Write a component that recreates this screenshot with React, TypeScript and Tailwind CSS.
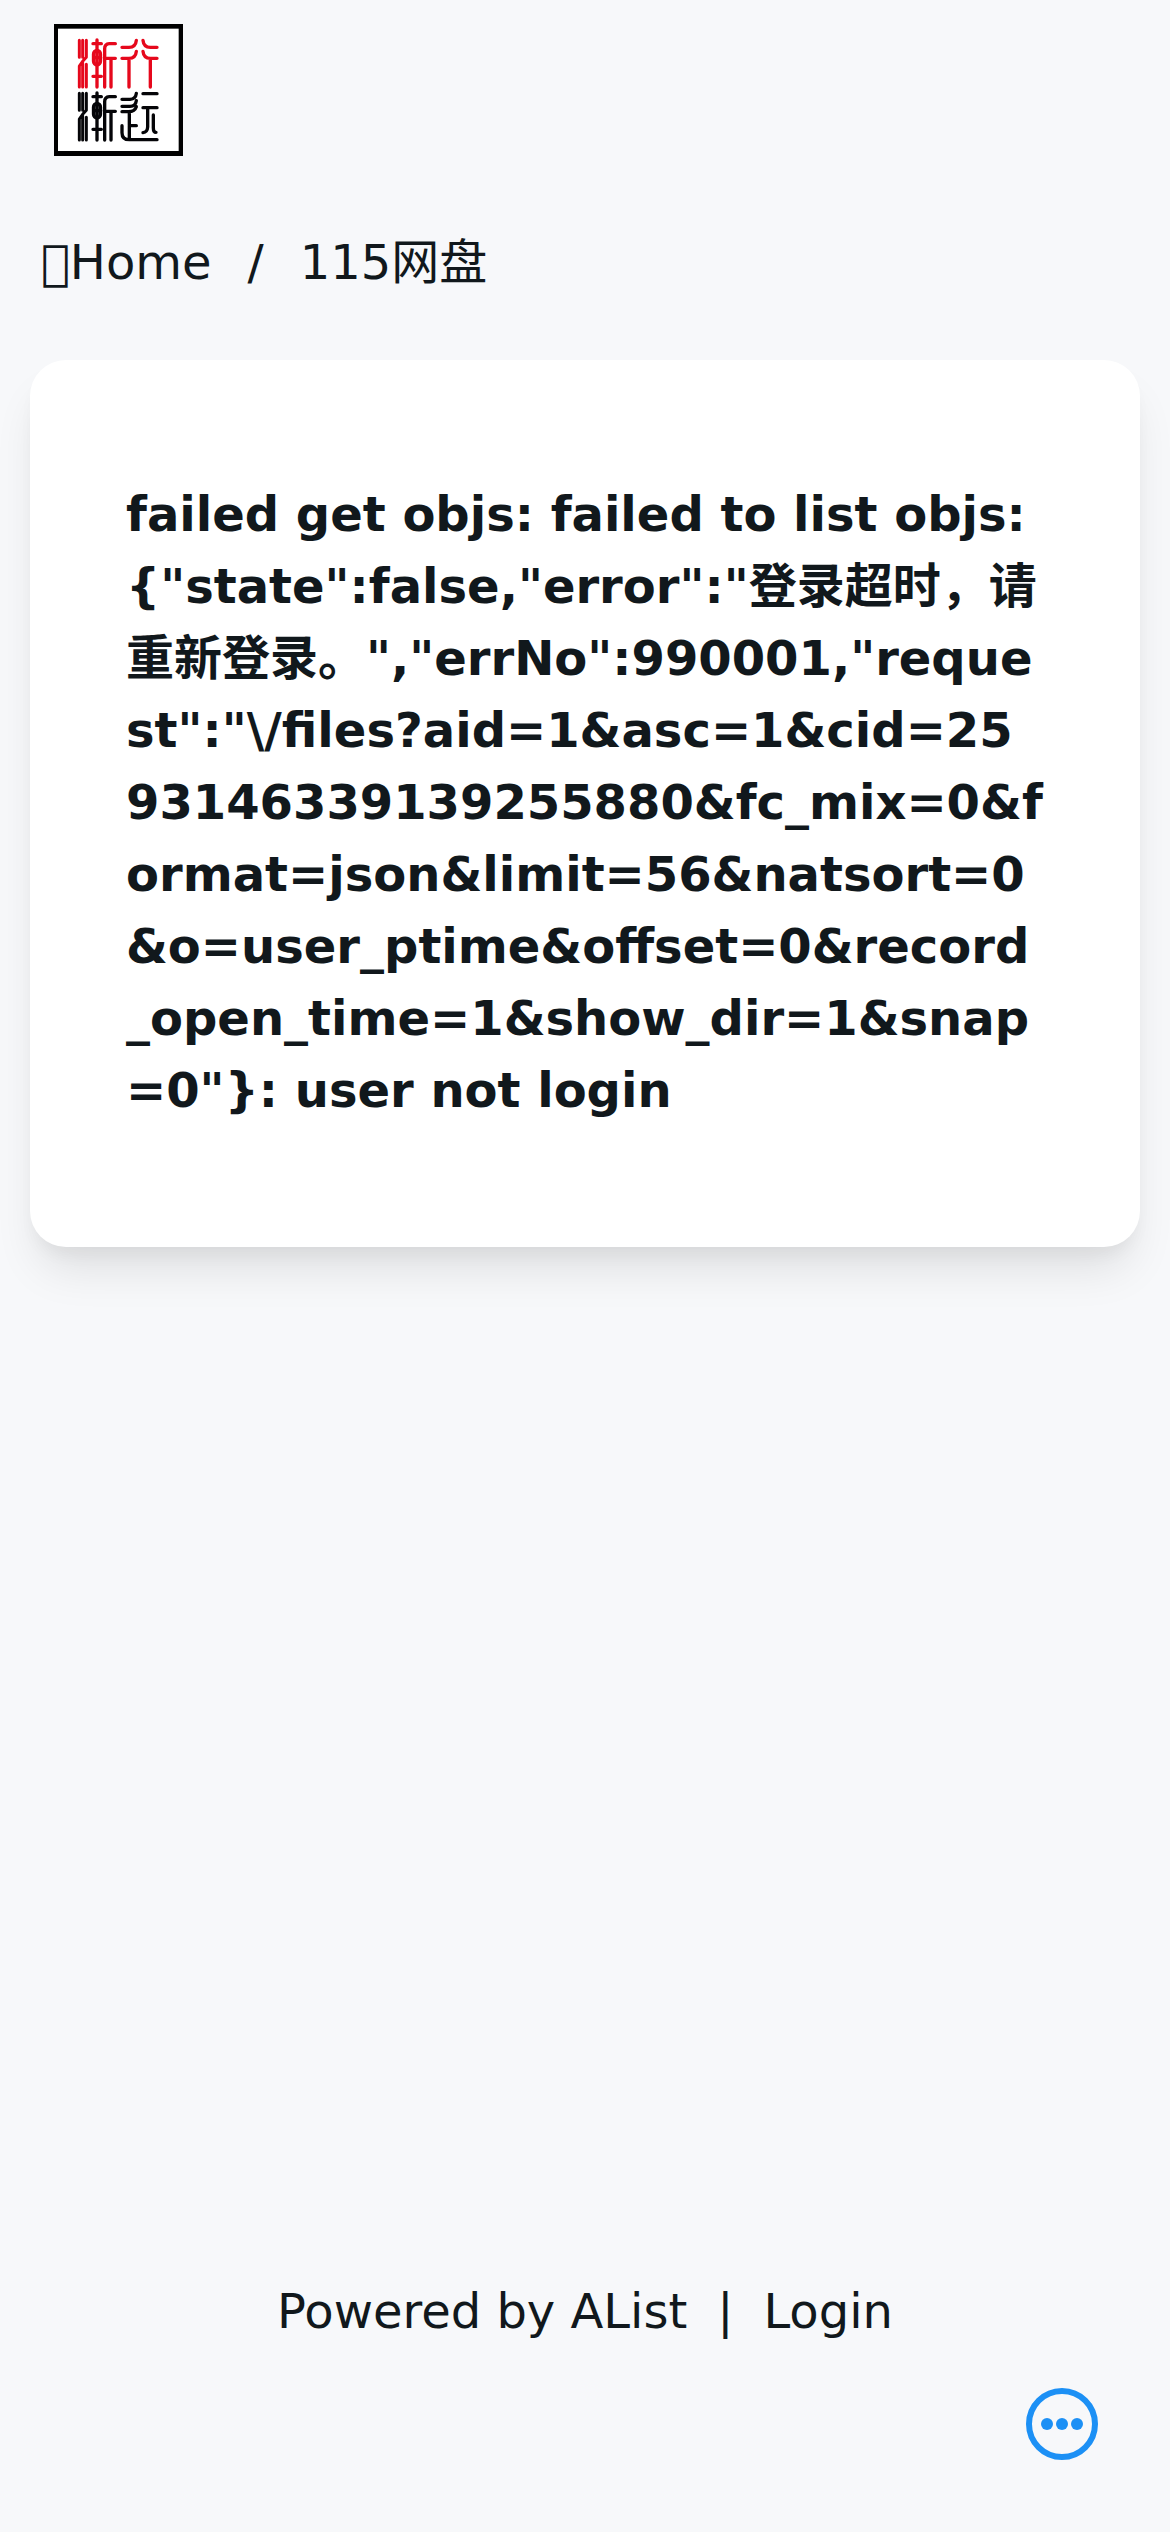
import React from 'react';

const errorMessage = 'failed get objs: failed to list objs: {"state":false,"error":"登录超时，请重新登录。","errNo":990001,"request":"\\/files?aid=1&asc=1&cid=2593146339139255880&fc_mix=0&format=json&limit=56&natsort=0&o=user_ptime&offset=0&record_open_time=1&show_dir=1&snap=0"}: user not login';

// left half shared by both rows of the seal
const SealLeft: React.FC = () => (
    <>
        <path strokeWidth="9" d="M118 91V142M128 91V142M139 91V142L128 154L118 168V231M128 158V231M139 163V231" />
        <path d="M171 90V231M159 101H184M159 199H184M226 101H208Q194 102 194 116V231M194 145H226M213 145V231" />
        <rect x="161" y="122" width="20" height="42" rx="10" strokeWidth="11" />
        <path d="M161 143H182" />
    </>
);

const Logo: React.FC = () => (
    <svg className="w-[129px] h-[132px]" viewBox="42 42 387 396" fill="none" strokeWidth="10" strokeLinecap="round" strokeLinejoin="round" role="img" aria-label="渐行渐远">
        <rect x="42" y="42" width="387" height="396" fill="#000" />
        <rect x="54" y="56" width="362" height="367" fill="#fff" />
        <g stroke="#e6081c">
            <SealLeft />
            <path d="M289 91Q287 112 267 112H246M289 124Q287 145 267 145H246M267 145V231" />
            <path d="M309 91Q311 112 331 112H351M309 124Q311 145 331 145H351M331 145V231" />
        </g>
        <g stroke="#050508">
            <g transform="translate(0 159)">
                <SealLeft />
            </g>
            <path d="M289 250Q287 267 270 268H246M289 272Q287 289 270 289H246M289 290Q284 305 266 305H246M268 306V388M268 347H289M246 347V368Q246 389 268 389H351" />
            <path d="M309 251H351M309 293H351M323 293V351Q322 367 309 368M340 315V354Q340 367 348 367" />
        </g>
    </svg>
);

const MoreIcon: React.FC = () => (
    <svg className="w-[72px] h-[72px]" viewBox="0 0 72 72" fill="currentColor" aria-hidden="true">
        <circle cx="36" cy="36" r="33" fill="none" stroke="currentColor" strokeWidth="6" />
        <circle cx="21" cy="36" r="6" />
        <circle cx="36" cy="36" r="6" />
        <circle cx="51" cy="36" r="6" />
    </svg>
);

const App: React.FC = () => {
    return (
        <div className="min-h-screen flex flex-col bg-[#f7f8fa] text-[#11181c] text-[48px] leading-[72px] font-['DejaVu_Sans','Noto_Sans_CJK_SC',sans-serif]">
            <header className="px-[54px] pt-6">
                <a href="#" className="inline-block align-top">
                    <Logo />
                </a>
            </header>
            <main className="px-[30px] pt-[70px]">
                <nav aria-label="breadcrumb">
                    <ol className="flex gap-9 px-[11px]">
                        <li><a href="#">{'\ue88a'}Home</a></li>
                        <li aria-hidden="true">/</li>
                        <li><a href="#" aria-current="page">115网盘</a></li>
                    </ol>
                </nav>
                <section className="mt-[62px] px-24 pt-[118px] pb-[121px] bg-white rounded-[36px] shadow-[0_30px_45px_-9px_rgba(0,0,0,0.1),0_12px_18px_-6px_rgba(0,0,0,0.05)]">
                    <h2 className="font-bold break-all">{errorMessage}</h2>
                </section>
            </main>
            <footer className="mt-auto pb-[185px] flex justify-center gap-[30px]">
                <a href="#">Powered by AList</a>
                <span>|</span>
                <a href="#">Login</a>
            </footer>
            <button type="button" aria-label="More" className="fixed right-[72px] bottom-[72px] text-[#1c90f5]">
                <MoreIcon />
            </button>
        </div>
    );
};

export default App;
